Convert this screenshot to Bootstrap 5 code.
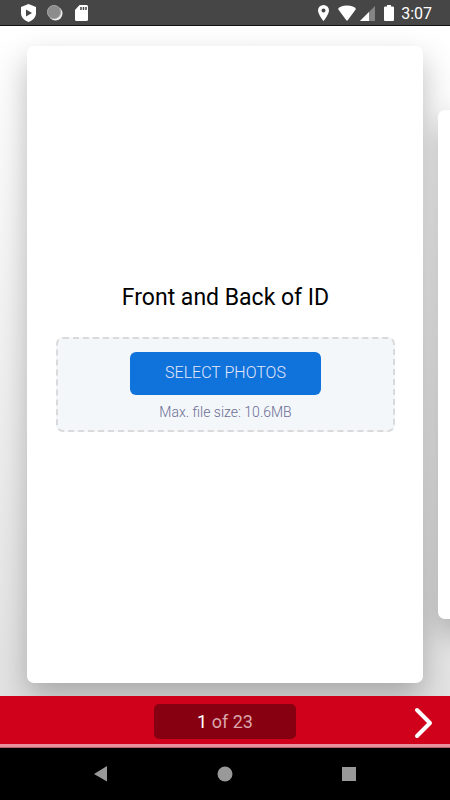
<!DOCTYPE html>
<html lang="en">
<head>
<meta charset="utf-8">
<meta name="viewport" content="width=device-width, initial-scale=1">
<title>Front and Back of ID</title>
<link href="https://cdn.jsdelivr.net/npm/bootstrap@5.3.0/dist/css/bootstrap.min.css" rel="stylesheet">
<style>
  body { font-family: Roboto, "Liberation Sans", sans-serif; }
  .status-bar { background: #464646; height: 26px; padding: 0 18px 0 20px; border-bottom: 1px solid #111; font-size: 16px; line-height: 24px; z-index: 1; }
  .clock { padding-top: 2px; margin-left: 6px; }
  .stage { padding: 20px 27px 13px; gap: 15px; background: linear-gradient(#fff, #e2e2e2); }
  .form-slide { flex: 0 0 100%; border-radius: 7px; padding: 0 28px 14px 29px; box-shadow: 0 14px 30px rgba(0, 0, 0, .26); }
  .next-slide { height: 80%; clip-path: inset(-60px -60px -60px -15px); }
  .question { font-size: 23px; line-height: 28px; margin-bottom: 25px; }
  .drop-zone { background: #f3f7fa; border: 2px dashed #dadada; border-radius: 7px; padding: 13px 16px 8px; }
  .btn-select { --bs-btn-color: #e4e6fa; --bs-btn-bg: #0f73db; --bs-btn-hover-bg: #0c62bd; --bs-btn-hover-color: #fff; --bs-btn-border-width: 0; --bs-btn-border-radius: 6px; width: 191px; height: 43px; font-size: 16px; font-weight: 300; }
  .hint { color: #6c6d95; font-size: 14px; line-height: 20px; font-weight: 300; margin-top: 7px; }
  .pager { background: #d0021b; height: 48px; z-index: 1; }
  .pager-count { background: #870011; color: #dba6ac; width: 142px; height: 35px; border-radius: 5px; font-size: 18px; line-height: 35px; margin-top: 3px; }
  .pager-next { width: 28px; right: 12px; padding-top: 6px; }
  .load-track { height: 4px; background: #e8909b; border-bottom: 1px solid #b5616b; z-index: 1; }
  .system-nav { background: #000; height: 52px; padding: 0 90px 0 89px; z-index: 1; }
</style>
<script src="https://cdn.jsdelivr.net/npm/bootstrap@5.3.0/dist/js/bootstrap.bundle.min.js"></script>
</head>
<body class="d-flex flex-column vh-100 overflow-hidden">
  <header class="status-bar d-flex align-items-center justify-content-between text-white flex-shrink-0 position-relative">
    <div class="d-flex align-items-center gap-2">
      <svg width="17" height="20" viewBox="0 0 17 20" aria-hidden="true"><path fill="#fff" d="M8.500 1 16 4v6c0 4-3 7.500-7.500 9C4 17.500 1 14 1 10V4z"/><path fill="#464646" d="M6 6.500v7l6-3.500z"/></svg>
      <svg width="20" height="20" viewBox="0 0 20 20" aria-hidden="true"><circle cx="10.500" cy="10.500" r="7" fill="#eee"/><circle cx="9" cy="9" r="7" fill="#8c8c8c"/><circle cx="9" cy="9" r="6.500" fill="none" stroke="#b4b4b4" stroke-dasharray="1.500 1"/></svg>
      <svg width="17" height="20" viewBox="0 0 17 20" aria-hidden="true"><path fill="#fff" d="M6.500 2H13.500Q15 2 15 3.500v13q0 1.500-1.500 1.500h-10Q2 18 2 16.500V7z"/><path d="M8 4v3M10.500 4v3M13 4v3" stroke="#464646" stroke-width="1.500"/></svg>
    </div>
    <div class="d-flex align-items-center">
      <svg width="13" height="18" viewBox="0 0 13 18" aria-hidden="true"><path fill="#fff" fill-rule="evenodd" d="M6.500 1A5.500 5.500 0 0 0 1 6.500C1 10.500 6.500 17 6.500 17S12 10.500 12 6.500A5.500 5.500 0 0 0 6.500 1zm0 3.500a2 2 0 1 1 0 4 2 2 0 0 1 0-4z"/></svg>
      <svg class="ms-2" width="18" height="18" viewBox="0 0 18 18" aria-hidden="true"><path fill="#fff" d="M0 5Q2 1.500 9 1.500T18 5L9.500 16.500h-1z"/></svg>
      <svg class="ms-1" width="15" height="18" viewBox="0 0 15 18" aria-hidden="true"><path fill="#858585" d="M15 2v15H0z"/><path fill="#fff" d="M9 8v9H0z"/></svg>
      <svg class="ms-2" width="12" height="18" viewBox="0 0 12 18" aria-hidden="true"><path fill="#fff" d="M4 1h4v1.500h1.500q1.500 0 1.500 1V16q0 1-1 1H2q-1 0-1-1V3.500q0-1 1.500-1H4z"/></svg>
      <span class="clock">3:07</span>
    </div>
  </header>

  <main class="stage d-flex flex-grow-1 overflow-hidden">
    <section class="form-slide bg-white d-flex flex-column justify-content-center text-center">
      <h1 class="question fw-normal text-black">Front and Back of ID</h1>
      <div class="drop-zone">
        <button type="button" class="btn btn-select" aria-describedby="size-hint">SELECT PHOTOS</button>
        <p class="hint mb-0" id="size-hint">Max. file size: 10.6MB</p>
      </div>
    </section>
    <section class="form-slide next-slide bg-white align-self-center" aria-label="Next question"></section>
  </main>

  <footer class="flex-shrink-0 position-relative z-1">
    <div class="pager d-flex align-items-center justify-content-center position-relative">
      <div class="pager-count text-center"><span class="text-white">1</span> of 23</div>
      <button type="button" class="pager-next btn border-0 px-0 pb-0 position-absolute top-0 bottom-0" aria-label="Next">
        <svg width="28" height="34" viewBox="0 0 28 34" aria-hidden="true"><path d="M7 4 20 17 7 30" fill="none" stroke="#fff" stroke-width="4" stroke-linecap="round" stroke-linejoin="round"/></svg>
      </button>
    </div>
    <div class="load-track position-relative"></div>
    <nav class="system-nav position-relative d-flex align-items-center justify-content-between" aria-label="System">
      <button type="button" class="btn border-0 p-0 lh-1" aria-label="Back"><svg width="22" height="18" viewBox="0 0 22 18" aria-hidden="true"><path fill="#999" d="M18 1v15.500L5 9z"/></svg></button>
      <button type="button" class="btn border-0 p-0 lh-1" aria-label="Home"><svg width="22" height="18" viewBox="0 0 22 18" aria-hidden="true"><circle cx="11" cy="9" r="7.500" fill="#999"/></svg></button>
      <button type="button" class="btn border-0 p-0 lh-1" aria-label="Recent apps"><svg width="22" height="18" viewBox="0 0 22 18" aria-hidden="true"><path fill="#999" d="M4 2h14v14H4z"/></svg></button>
    </nav>
  </footer>
</body>
</html>
